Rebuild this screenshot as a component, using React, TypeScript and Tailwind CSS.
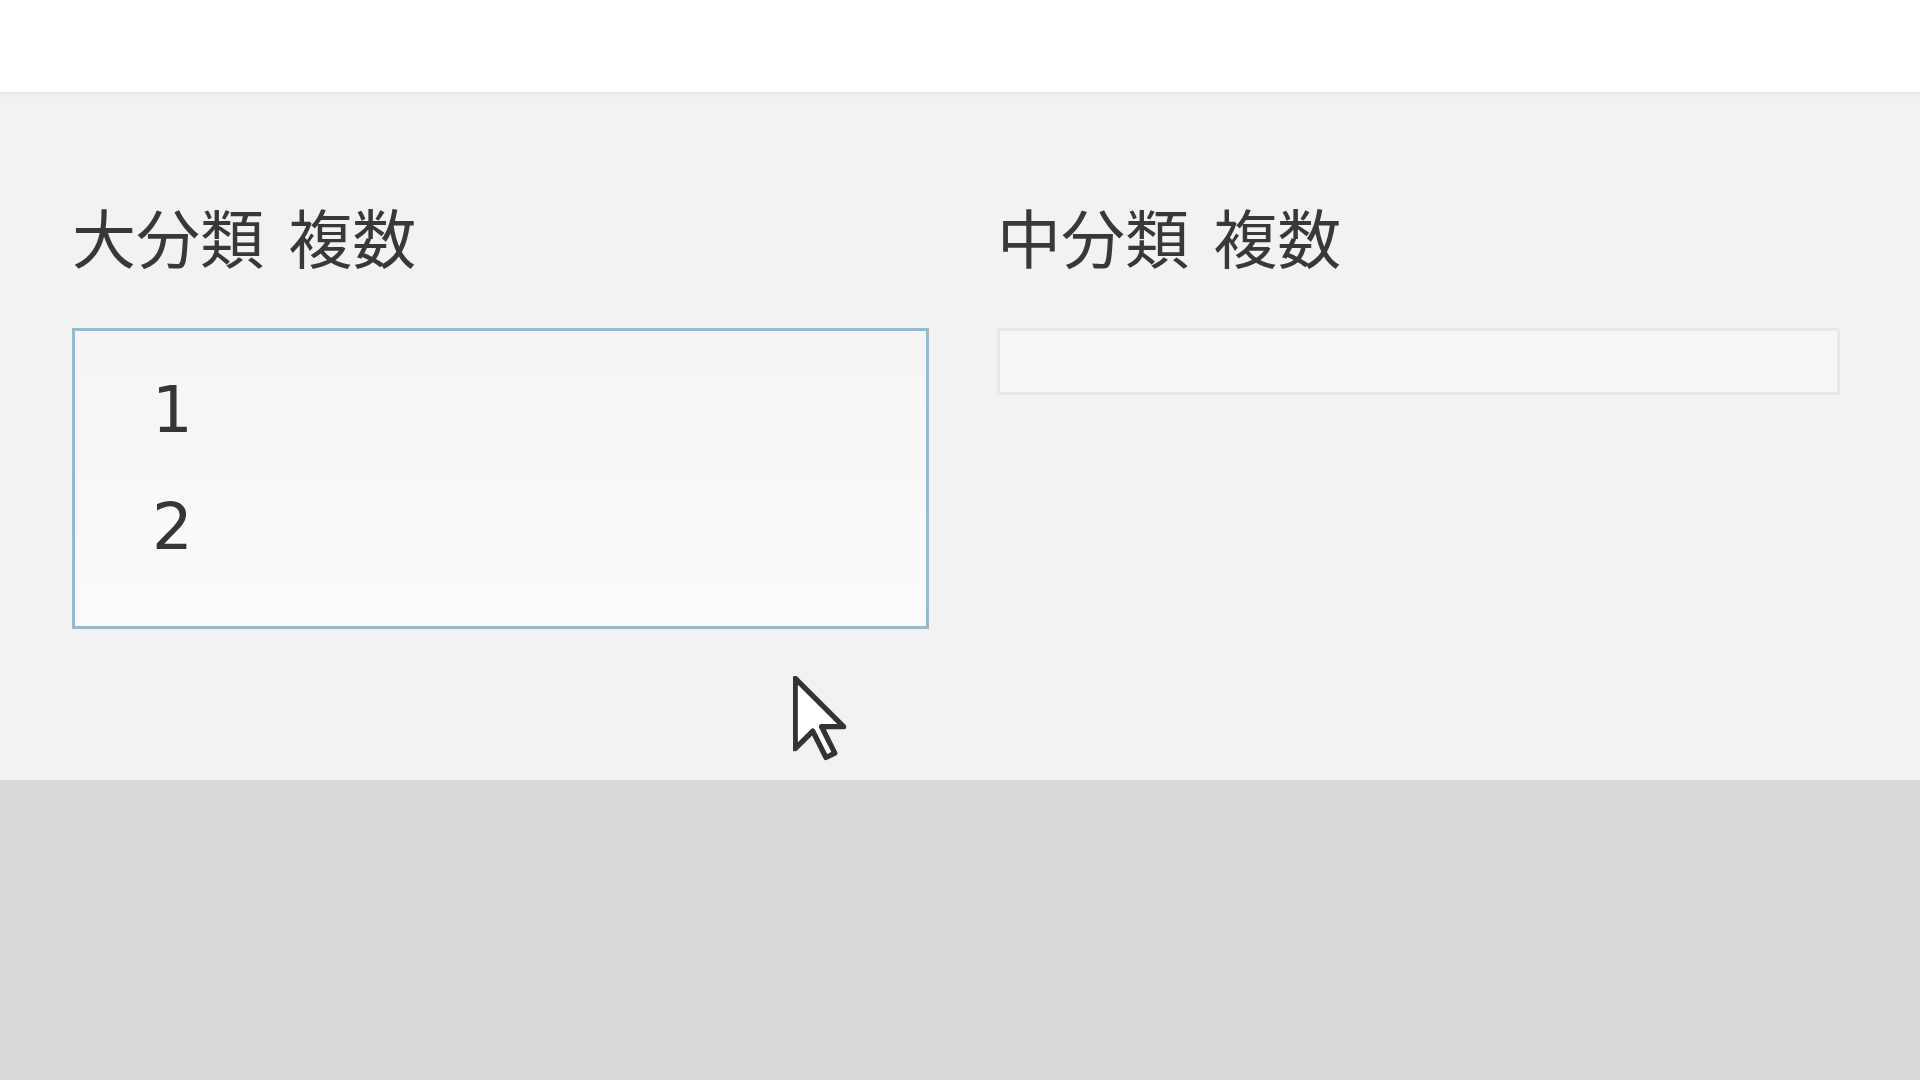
import React from "react";

const labelFont = { fontFamily: '"Noto Sans CJK JP", "Noto Sans", sans-serif' };

const MultiSelect = ({ items, active }: { items: string[]; active?: boolean }) => {
  if (!items.length) {
    return (
      <div className="h-[67px] w-full border-[3px] border-[#e8e8e8] bg-[#f6f6f6]" />
    );
  }
  return (
    <div
      className={`h-[301px] w-full border-[3px] ${
        active ? "border-[#8fbdd8]" : "border-[#e6e6e6]"
      } bg-gradient-to-b from-[#f5f5f5] to-[#fbfbfb] pt-[21px] pl-[77px]`}
    >
      {items.map((item) => (
        <div
          key={item}
          className="h-[117px] text-[64px] leading-[117px] text-[#363636] font-['DejaVu_Sans',sans-serif]"
        >
          {item}
        </div>
      ))}
    </div>
  );
};

const Field = ({ label, children }: { label: string; children: React.ReactNode }) => (
  <div className="flex flex-col">
    <p
      style={labelFont}
      className="h-[64px] text-[64px] leading-[64px] text-[#383838] [word-spacing:10px] whitespace-nowrap"
    >
      {label}
    </p>
    <div className="mt-[61px]">{children}</div>
  </div>
);

const Cursor = () => (
  <svg
    className="absolute left-[793px] top-[676px]"
    width="55"
    height="86"
    viewBox="0 0 12.5 19.5"
  >
    <path
      d="M0.5 0.5 L0.5 16.5 L4.5 12.5 L7.5 18.5 L9.5 17.5 L6.5 11.5 L11.5 11.5 Z"
      fill="#ffffff"
      stroke="#333333"
      strokeWidth="1.2"
      strokeLinejoin="round"
    />
  </svg>
);

export default function App() {
  return (
    <div className="relative flex h-screen w-full flex-col overflow-hidden bg-[#d8d9d9]">
      {/* top bar */}
      <div className="h-[92px] bg-white" />
      <div className="h-[6px] bg-gradient-to-b from-[#e6e6e6] to-[#f2f2f2]" />

      {/* form panel */}
      <div className="h-[682px] bg-[#f2f2f2] pt-[105px] pl-[72px]">
        <div className="grid grid-cols-[857px_843px] gap-x-[68px]">
          <Field label="大分類 複数">
            <MultiSelect items={["1", "2"]} active />
          </Field>
          <Field label="中分類 複数">
            <MultiSelect items={[]} />
          </Field>
        </div>
      </div>

      {/* lower area */}
      <div className="flex-1 bg-[#d8d9d9]" />

      <Cursor />
    </div>
  );
}
